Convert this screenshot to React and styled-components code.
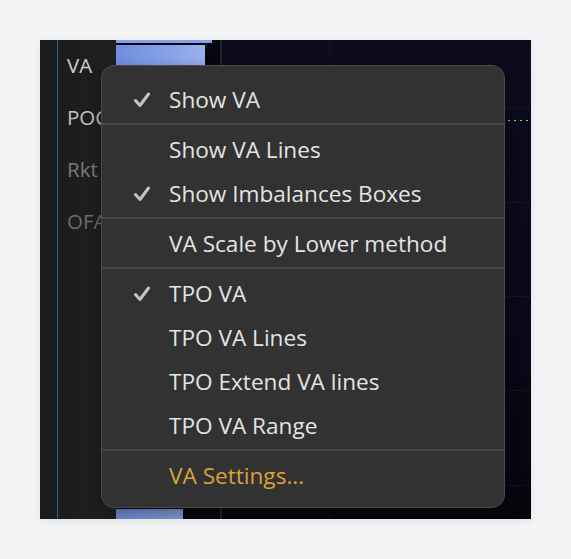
import React from "react";
import styled, { createGlobalStyle } from "styled-components";

const GlobalStyle = createGlobalStyle`
  body {
    margin: 0;
    background: #f3f4f6;
    font-family: "Open Sans", "Noto Sans", sans-serif;
  }
`;

const Page = styled.div`
  padding: 40px;
`;

const Card = styled.div`
  position: relative;
  width: 491px;
  height: 479px;
  display: flex;
  overflow: hidden;
  box-shadow: 0 2px 8px rgba(0, 0, 0, 0.08);
`;

const Gutter = styled.div`
  width: 17px;
  background: #1b1b1b;
`;

const Labels = styled.div`
  width: 59px;
  border-left: 1px solid #2563a8;
  background: linear-gradient(90deg, #1c1c1c, #202020);
  padding: 13px 0 0 9px;
  box-sizing: border-box;
  display: flex;
  flex-direction: column;
  gap: 28px;
`;

const Label = styled.div`
  font-size: 20.5px;
  line-height: 24px;
  color: ${(p) => p.$color};
  white-space: nowrap;
`;

const BarCol = styled.div`
  width: 96px;
  background: #07070f;
  display: flex;
  flex-direction: column;
`;

const TopStrip = styled.div`
  height: 3px;
  width: 96px;
  background: #86a0ea;
  margin-bottom: 2px;
`;

const Bar = styled.div`
  height: ${(p) => p.$h}px;
  width: ${(p) => p.$w}px;
  background: ${(p) => p.$bg};
`;

const Spacer = styled.div`
  flex: 1;
`;

const Divider = styled.div`
  width: 8px;
  background: #06060c;
  border-right: 2px solid #23232c;
`;

const Chart = styled.div`
  flex: 1;
  background: linear-gradient(180deg, #0c0c1e 0%, #09091a 55%, #05050c 100%);
`;

const Menu = styled.div`
  position: absolute;
  left: 61px;
  top: 25px;
  width: 404px;
  box-sizing: border-box;
  background: #323232;
  border: 1px solid #4a4a4a;
  border-radius: 13px;
  padding: 12px 0 9px;
  box-shadow: 0 4px 14px rgba(0, 0, 0, 0.35);
`;

const Item = styled.div`
  height: 44px;
  display: flex;
  align-items: center;
  padding-left: 31px;
  font-size: 22.6px;
  line-height: 28px;
  color: ${(p) => (p.$accent ? "#dba23a" : "#e4e4e4")};
  white-space: nowrap;
`;

const CheckBox = styled.span`
  width: 36px;
  display: flex;
  align-items: center;
`;

const Sep = styled.div`
  height: 2px;
  background: #454545;
  margin: 1px 0 3px;
`;

const Check = () => (
  <svg width="18" height="16" viewBox="0 0 18 16">
    <path
      d="M2.5 8.5 L7 13.5 L15.5 2"
      fill="none"
      stroke="#c4c4c4"
      strokeWidth="3"
      strokeLinecap="round"
      strokeLinejoin="round"
    />
  </svg>
);

const MenuItem = ({ checked, accent, children }) => (
  <Item $accent={accent}>
    <CheckBox>{checked && <Check />}</CheckBox>
    {children}
  </Item>
);

const Grid = () => (
  <svg width="309" height="479" style={{ display: "block" }}>
    {[67, 162, 256, 350, 445].map((y) => (
      <line
        key={y}
        x1="0"
        y1={y + 0.5}
        x2="309"
        y2={y + 0.5}
        stroke="#2a2a3a"
        strokeDasharray="1 2"
      />
    ))}
    <line x1="107.5" y1="0" x2="107.5" y2="479" stroke="#22222e" strokeDasharray="1 2" />
    <line x1="286" y1="80.5" x2="306" y2="80.5" stroke="#5cf23a" strokeDasharray="2 4" />
  </svg>
);

export default function App() {
  return (
    <Page>
      <GlobalStyle />
      <Card>
        <Gutter />
        <Labels>
          <Label $color="#c9d0da">VA</Label>
          <Label $color="#c2c2c2">POC</Label>
          <Label $color="#7a7a7a">Rkt</Label>
          <Label $color="#6c6c6c">OFA</Label>
        </Labels>
        <BarCol>
          <TopStrip />
          <Bar $h={60} $w={89} $bg="linear-gradient(110deg, #6d8de0, #a3b8f2)" />
          <Spacer />
          <Bar $h={10} $w={67} $bg="linear-gradient(90deg, #6a86c8, #7d96d0)" />
        </BarCol>
        <Divider />
        <Chart>
          <Grid />
        </Chart>
        <Menu>
          <MenuItem checked>Show VA</MenuItem>
          <Sep />
          <MenuItem>Show VA Lines</MenuItem>
          <MenuItem checked>Show Imbalances Boxes</MenuItem>
          <Sep />
          <MenuItem>VA Scale by Lower method</MenuItem>
          <Sep />
          <MenuItem checked>TPO VA</MenuItem>
          <MenuItem>TPO VA Lines</MenuItem>
          <MenuItem>TPO Extend VA lines</MenuItem>
          <MenuItem>TPO VA Range</MenuItem>
          <Sep />
          <MenuItem accent>VA Settings...</MenuItem>
        </Menu>
      </Card>
    </Page>
  );
}
